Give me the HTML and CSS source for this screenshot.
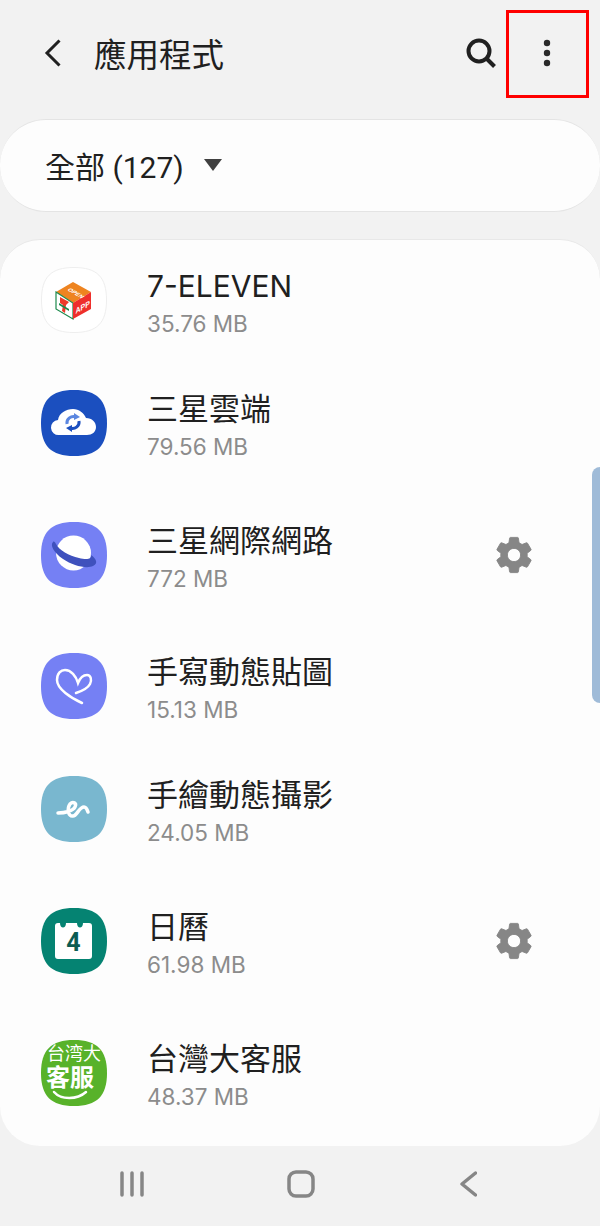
FILE: index.html
```html
<!doctype html>
<html>

<head>
  <title>應用程式</title>
  <meta charset="utf-8">
  <link rel="stylesheet" href="styles.css">
</head>

<body>
  <div id="screen">
    <div class="topBar">
      <svg class="backIcon" width="18" height="30" viewBox="0 0 18 30">
        <path d="M15.5 2.5 3 15l12.500 12.500" />
      </svg>
      <span class="pageTitle">應用程式</span>
      <svg class="searchIcon" width="32" height="32" viewBox="0 0 32 32">
        <circle cx="14" cy="14" r="10.500" />
        <path d="m21.500 21.500 8 8" />
      </svg>
      <svg class="moreIcon" width="8" height="28" viewBox="0 0 8 28">
        <circle cx="4" cy="4" r="3.200" />
        <circle cx="4" cy="14" r="3.200" />
        <circle cx="4" cy="24" r="3.200" />
      </svg>
    </div>
    <div class="highlightBox"></div>

    <div class="filterPill">
      <span class="filterText">全部 (127)</span>
      <svg class="filterArrow" width="18" height="12" viewBox="0 0 18 12">
        <path d="M0 0h18L9 12z" />
      </svg>
    </div>

    <div class="appList">
      <!-- 7-ELEVEN -->
      <div class="appRow">
        <svg class="appIcon" viewBox="0 0 66 66">
          <path d="M33 .5C56 .5 65.500 10 65.500 33S56 65.500 33 65.500.5 56 .5 33 10 .5 33 .5z" fill="#fff" stroke="#eeeeee" />
          <path d="M32 15 50 25 32 36 15 25z" fill="#ee8420" />
          <path d="M15 25 32 36V52L15 42z" fill="#fff" stroke="#1d8a4c" stroke-width="1.200" />
          <path d="M32 36 50 25V42L32 52z" fill="#ee2f2c" />
          <path d="M19 30l9 5-3 3-1 8-3-2 1-6-3-2z" fill="#ee3a2a" />
          <path d="M18 36l10 6v2l-10-6z" fill="#1d8a4c" />
          <text class="cubeText" transform="matrix(.87 -.5 0 1 34.500 47)">APP</text>
          <text class="cubeTextSmall" transform="matrix(.85 .5 -.85 .5 26 23)">OPEN</text>
        </svg>
        <div class="appInfo">
          <span class="appName appNameLatin">7-ELEVEN</span>
          <span class="appSize">35.76 MB</span>
        </div>
      </div>

      <!-- 三星雲端 -->
      <div class="appRow appRowWide">
        <svg class="appIcon" viewBox="0 0 66 66">
          <path d="M33 0C56 0 66 10 66 33S56 66 33 66 0 56 0 33 10 0 33 0z" fill="#1b4fbf" />
          <path d="M18 45a7.500 7.500 0 0 1-1-15c1-7 8-11 15-11 6 0 11 4 13 9 6 0 10 4 10 9s-4 8-9 8z" fill="#fff" />
          <path d="M26 34a6.500 6.500 0 0 1 9-7" fill="none" stroke="#5b86e0" stroke-width="3" />
          <path d="M38 31a6.500 6.500 0 0 1-9 7" fill="none" stroke="#1b4fbf" stroke-width="3" />
          <path d="M33 23l6 4-6 3z" fill="#5b86e0" />
          <path d="M31 42l-6-4 6-3z" fill="#1b4fbf" />
        </svg>
        <div class="appInfo">
          <span class="appName">三星雲端</span>
          <span class="appSize">79.56 MB</span>
        </div>
      </div>

      <!-- 三星網際網路 -->
      <div class="appRow appRowSnug">
        <svg class="appIcon" viewBox="0 0 66 66">
          <path d="M33 0C56 0 66 10 66 33S56 66 33 66 0 56 0 33 10 0 33 0z" fill="#7580f4" />
          <circle cx="32.500" cy="31" r="17.500" fill="#fff" />
          <path d="M12 20C9 23 12 30 22 37 32 44 46 47 52 44 57 42 56 37 50 33 51 37 46 38 38 36 28 34 18 28 15 22 14 20 13 19 12 20z" fill="#3f51bd" />
        </svg>
        <div class="appInfo">
          <span class="appName">三星網際網路</span>
          <span class="appSize">772 MB</span>
        </div>
        <svg class="gearIcon" viewBox="0 0 24 24">
          <path d="M19.140 12.940c.04-.3.06-.61.06-.94 0-.32-.02-.64-.07-.94l2.030-1.580a.49.49 0 0 0 .12-.61l-1.920-3.320a.488.488 0 0 0-.59-.22l-2.390.96c-.5-.38-1.030-.7-1.620-.94l-.36-2.540a.484.484 0 0 0-.48-.41h-3.840c-.24 0-.43.17-.47.41l-.36 2.540c-.59.24-1.130.57-1.620.94l-2.390-.96c-.22-.08-.47 0-.59.22L2.740 8.870c-.12.21-.08.47.12.61l2.030 1.580c-.05.3-.09.63-.09.94s.02.64.07.94l-2.030 1.580a.49.49 0 0 0-.12.61l1.920 3.320c.12.22.37.29.59.22l2.390-.96c.5.38 1.030.7 1.620.94l.36 2.540c.05.24.24.41.48.41h3.840c.24 0 .44-.17.47-.41l.36-2.540c.59-.24 1.130-.56 1.620-.94l2.390.96c.22.08.47 0 .59-.22l1.920-3.320c.12-.22.07-.47-.12-.61l-2.010-1.580zM12 15.600c-1.980 0-3.600-1.620-3.600-3.600s1.620-3.600 3.600-3.600 3.600 1.620 3.600 3.600-1.620 3.600-3.600 3.600z" />
        </svg>
      </div>

      <!-- 手寫動態貼圖 -->
      <div class="appRow">
        <svg class="appIcon" viewBox="0 0 66 66">
          <path d="M33 0C56 0 66 10 66 33S56 66 33 66 0 56 0 33 10 0 33 0z" fill="#7580f4" />
          <path d="M41 50C30 45 16 36 16 27 16 20 20 17 24 17 30 17 35 23 37 30 39 25 42 22 46 22 50 22 51 27 49 31 47 35 41 38 35 40" fill="none" stroke="#fff" stroke-width="2.500" stroke-linecap="round" />
        </svg>
        <div class="appInfo">
          <span class="appName">手寫動態貼圖</span>
          <span class="appSize">15.13 MB</span>
        </div>
      </div>

      <!-- 手繪動態攝影 -->
      <div class="appRow appRowWide">
        <svg class="appIcon" viewBox="0 0 66 66">
          <path d="M33 0C56 0 66 10 66 33S56 66 33 66 0 56 0 33 10 0 33 0z" fill="#79b7cf" />
          <path d="M17 37C24 37 32 35 34 31 36 27 32 25 29 28 26 32 27 41 32 40 36 40 38 31 43 31 45 31 46 33 47 36" fill="none" stroke="#fff" stroke-width="3.500" stroke-linecap="round" />
        </svg>
        <div class="appInfo">
          <span class="appName">手繪動態攝影</span>
          <span class="appSize">24.05 MB</span>
        </div>
      </div>

      <!-- 日曆 -->
      <div class="appRow appRowWide">
        <svg class="appIcon" viewBox="0 0 66 66">
          <path d="M33 0C56 0 66 10 66 33S56 66 33 66 0 56 0 33 10 0 33 0z" fill="#058372" />
          <path d="M17 15h2c0 6 6 6 6 0h11c0 6 6 6 6 0h6a3 3 0 0 1 3 3v30a3 3 0 0 1-3 3H17a3 3 0 0 1-3-3V18a3 3 0 0 1 3-3z" fill="#fff" />
          <text class="calendarDay" x="32.500" y="43">4</text>
        </svg>
        <div class="appInfo">
          <span class="appName">日曆</span>
          <span class="appSize">61.98 MB</span>
        </div>
        <svg class="gearIcon" viewBox="0 0 24 24">
          <path d="M19.140 12.940c.04-.3.06-.61.06-.94 0-.32-.02-.64-.07-.94l2.030-1.580a.49.49 0 0 0 .12-.61l-1.920-3.320a.488.488 0 0 0-.59-.22l-2.390.96c-.5-.38-1.030-.7-1.620-.94l-.36-2.540a.484.484 0 0 0-.48-.41h-3.840c-.24 0-.43.17-.47.41l-.36 2.540c-.59.24-1.130.57-1.620.94l-2.390-.96c-.22-.08-.47 0-.59.22L2.740 8.870c-.12.21-.08.47.12.61l2.030 1.580c-.05.3-.09.63-.09.94s.02.64.07.94l-2.030 1.580a.49.49 0 0 0-.12.61l1.920 3.320c.12.22.37.29.59.22l2.390-.96c.5.38 1.030.7 1.620.94l.36 2.540c.05.24.24.41.48.41h3.840c.24 0 .44-.17.47-.41l.36-2.540c.59-.24 1.130-.56 1.620-.94l2.390.96c.22.08.47 0 .59-.22l1.920-3.320c.12-.22.07-.47-.12-.61l-2.010-1.580zM12 15.600c-1.980 0-3.600-1.620-3.600-3.600s1.620-3.600 3.600-3.600 3.600 1.620 3.600 3.600-1.620 3.600-3.600 3.600z" />
        </svg>
      </div>

      <!-- 台灣大客服 -->
      <div class="appRow">
        <svg class="appIcon" viewBox="0 0 66 66">
          <path d="M33 0C56 0 66 10 66 33S56 66 33 66 0 56 0 33 10 0 33 0z" fill="#58b22a" />
          <text class="logoTop" x="33" y="20">台湾大</text>
          <text class="logoBig" x="29" y="46">客服</text>
          <path d="M13 52C20 60 36 60 45 52" fill="none" stroke="#fff" stroke-width="2.500" stroke-linecap="round" />
        </svg>
        <div class="appInfo">
          <span class="appName">台灣大客服</span>
          <span class="appSize">48.37 MB</span>
        </div>
      </div>

      <div class="scrollThumb"></div>
    </div>

    <div class="navBar">
      <svg class="navIcon" width="26" height="26" viewBox="0 0 26 26">
        <path d="M3 2v22M13 2v22M23 2v22" />
      </svg>
      <svg class="navIcon" width="28" height="28" viewBox="0 0 28 28">
        <rect x="2" y="2" width="24" height="24" rx="7" />
      </svg>
      <svg class="navIcon" width="20" height="26" viewBox="0 0 20 26">
        <path d="M18.500 2 5 13l13.500 11" />
      </svg>
    </div>
  </div>
</body>

</html>
```

FILE: styles.css
```css
body {
  margin: 0;
  padding: 0;
  background-color: #f2f2f2;
  color: #202020;
  font-family: Roboto, "Noto Sans CJK TC", sans-serif;
}

#screen {
  position: relative;
  width: 600px;
  height: 1226px;
  overflow: hidden;
}

.topBar {
  display: flex;
  align-items: center;
  height: 105px;
  padding-bottom: 2px;
  padding-left: 44px;
}

.backIcon {
  fill: none;
  stroke: #202020;
  stroke-width: 3;
}

.pageTitle {
  margin-left: 32px;
  font-size: 32.5px;
  flex: 1;
}

.searchIcon {
  margin-right: 1px;
  fill: none;
  stroke: #202020;
  stroke-width: 4;
}

.moreIcon {
  margin-left: 45px;
  margin-right: 49px;
  fill: #2a2a2a;
}

.highlightBox {
  position: absolute;
  top: 10px;
  left: 506px;
  width: 77px;
  height: 82px;
  border: 3px solid #ff0000;
}

.filterPill {
  display: flex;
  align-items: center;
  height: 89px;
  margin-top: 12px;
  padding-bottom: 2px;
  padding-left: 45px;
  background-color: #fdfdfd;
  border: 1px solid #e4e4e4;
  border-left: 0;
  border-right: 0;
  border-radius: 46px;
}

.filterText {
  font-size: 30px;
}

.filterArrow {
  margin-left: 20px;
  fill: #404040;
}

.appList {
  position: relative;
  height: 879px;
  margin-top: 27px;
  padding-top: 27px;
  background-color: #fdfdfd;
  border-top: 1px solid #e8e8e8;
  border-radius: 40px;
}

.appRow {
  display: flex;
  align-items: center;
  height: 66px;
  margin-bottom: 57px;
  padding-left: 41px;
  padding-right: 64px;
}

.appRowWide {
  margin-bottom: 66px;
}

.appRowSnug {
  margin-bottom: 65px;
}

.appIcon {
  width: 66px;
  height: 66px;
  flex: none;
}

.appInfo {
  display: flex;
  flex-direction: column;
  flex: 1;
  margin-left: 40px;
  padding-top: 8px;
  font-family: Inter, "Noto Sans CJK TC", sans-serif;
}

.appName {
  font-size: 31px;
  line-height: 38px;
}

.appNameLatin {
  font-size: 30px;
}

.appSize {
  font-size: 22.5px;
  line-height: 37px;
  color: #8c8c8c;
}

.gearIcon {
  width: 44px;
  height: 44px;
  fill: #868686;
  stroke: #868686;
  stroke-width: .5;
}

.scrollThumb {
  position: absolute;
  top: 227px;
  right: 0;
  width: 8px;
  height: 236px;
  background-color: #9fbbd8;
  border-radius: 8px 0 0 8px;
}

.navBar {
  display: flex;
  gap: 142px;
  align-items: center;
  height: 76px;
  padding-bottom: 4px;
  padding-left: 119px;
}

.navIcon {
  fill: none;
  stroke: #868686;
  stroke-width: 3.5;
  stroke-linecap: round;
  stroke-linejoin: round;
}

.cubeText {
  font-family: "Liberation Sans", sans-serif;
  font-size: 8px;
  font-weight: bold;
  fill: #fff;
}

.cubeTextSmall {
  font-family: "Liberation Sans", sans-serif;
  font-size: 6px;
  font-weight: bold;
  fill: #fff;
}

.calendarDay {
  font-family: Roboto, sans-serif;
  font-size: 25px;
  font-weight: bold;
  fill: #0b5c52;
  text-anchor: middle;
}

.logoTop {
  font-family: "Noto Sans CJK SC", sans-serif;
  font-size: 18px;
  fill: #fff;
  text-anchor: middle;
}

.logoBig {
  font-family: "Noto Sans CJK TC", sans-serif;
  font-size: 24px;
  font-weight: bold;
  fill: #fff;
  text-anchor: middle;
}
```
